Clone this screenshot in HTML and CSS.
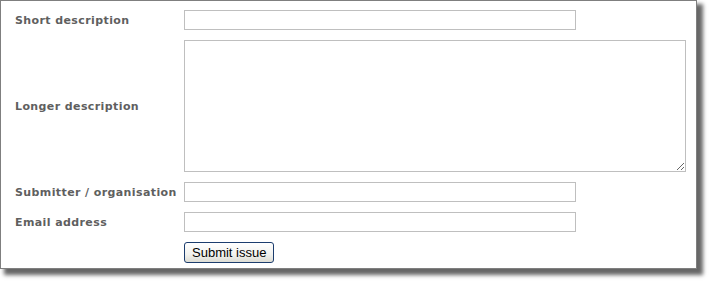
FILE: index.html
```html
<!DOCTYPE html>
<html lang="en">
<head>
  <meta charset="UTF-8">
  <title>Submit issue</title>
  <link rel="stylesheet" href="styles.css">
</head>
<body>

  <div class="frame">
    <form class="issue-form" onsubmit="return false;">
      <label class="field-label" for="short">Short description</label>
      <input class="text-input" type="text" id="short">

      <label class="field-label" for="longer">Longer description</label>
      <textarea class="text-area" id="longer"></textarea>

      <label class="field-label" for="submitter">Submitter / organisation</label>
      <input class="text-input" type="text" id="submitter">

      <label class="field-label" for="email">Email address</label>
      <input class="text-input" type="text" id="email">

      <span></span>
      <div><button class="submit-btn" type="submit">Submit issue</button></div>
    </form>
  </div>

</body>
</html>
```

FILE: styles.css
```css
html, body {
  margin: 0;
  min-height: 284px;
  background-color: white;
}
.frame {
  width: 695px;
  height: 267px;
  border: 1px solid #7f7f7f;
  background-color: white;
  box-shadow: 5px 5px 4px 1px rgba(0, 0, 0, 0.6);
}
.issue-form {
  display: grid;
  grid-template-columns: 169px 1fr;
  row-gap: 10px;
  padding: 9px 0 0 14px;
  align-items: center;
}
.field-label {
  font-family: "DejaVu Sans", Verdana, sans-serif;
  font-weight: bold;
  font-size: 11px;
  color: #5f5f5f;
  letter-spacing: 0.4px;
}
.text-input {
  box-sizing: border-box;
  width: 392px;
  height: 20px;
  margin: 0;
  border: 1px solid #bfbfbf;
  padding: 1px 3px;
}
.text-area {
  box-sizing: border-box;
  width: 502px;
  height: 132px;
  margin: 0;
  border: 1px solid #bfbfbf;
  resize: both;
}
.submit-btn {
  font-family: "Liberation Sans", Arial, sans-serif;
  font-size: 13px;
  color: black;
  height: 21px;
  padding: 0 7px;
  border: 1px solid #1c3d6e;
  border-radius: 3px;
  background: linear-gradient(#ffffff, #f2f2ee 60%, #dcdcd4);
}
```
